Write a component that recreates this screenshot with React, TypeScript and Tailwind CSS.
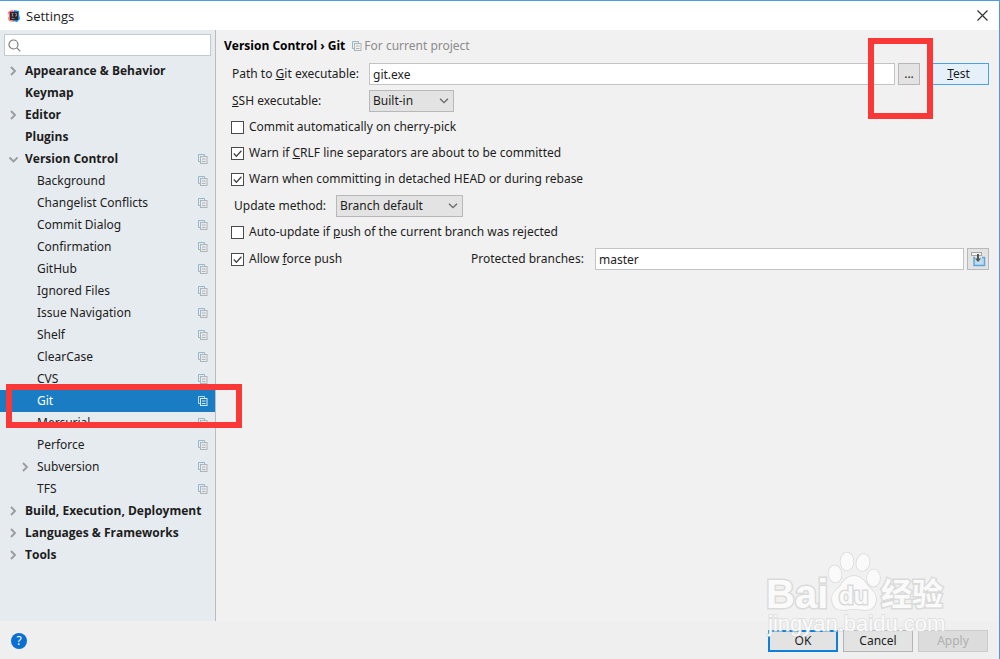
import { useState } from 'react';
import type { ReactNode } from 'react';
import clsx from 'clsx';

type TreeNode = {
  name: string;
  level: 0 | 1;
  arrow?: 'right' | 'down';
  perProject?: boolean;
};

const TREE: TreeNode[] = [
  { name: 'Appearance & Behavior', level: 0, arrow: 'right' },
  { name: 'Keymap', level: 0 },
  { name: 'Editor', level: 0, arrow: 'right' },
  { name: 'Plugins', level: 0 },
  { name: 'Version Control', level: 0, arrow: 'down', perProject: true },
  { name: 'Background', level: 1, perProject: true },
  { name: 'Changelist Conflicts', level: 1, perProject: true },
  { name: 'Commit Dialog', level: 1, perProject: true },
  { name: 'Confirmation', level: 1, perProject: true },
  { name: 'GitHub', level: 1, perProject: true },
  { name: 'Ignored Files', level: 1, perProject: true },
  { name: 'Issue Navigation', level: 1, perProject: true },
  { name: 'Shelf', level: 1, perProject: true },
  { name: 'ClearCase', level: 1, perProject: true },
  { name: 'CVS', level: 1, perProject: true },
  { name: 'Git', level: 1, perProject: true },
  { name: 'Mercurial', level: 1, perProject: true },
  { name: 'Perforce', level: 1, perProject: true },
  { name: 'Subversion', level: 1, arrow: 'right', perProject: true },
  { name: 'TFS', level: 1, perProject: true },
  { name: 'Build, Execution, Deployment', level: 0, arrow: 'right' },
  { name: 'Languages & Frameworks', level: 0, arrow: 'right' },
  { name: 'Tools', level: 0, arrow: 'right' },
];

const SELECTED = 'Git';

function AppIcon() {
  return (
    <svg width="14" height="14" viewBox="0 0 14 14">
      <path d="M1 3l4-2 4 2-2 8-4 1-2-2 1-3z" fill="#fb5f7c" />
      <path d="M2 9l4 1 1 3-5-1z" fill="#f9845a" />
      <path d="M7 1l5 1v3l1 5-3 3-4-1z" fill="#1683e8" />
      <rect x="3" y="3" width="8" height="8" fill="#2a262c" />
      <path d="M4.500 4.500h2M5.500 4.500V7M4.500 7h2M8 4.500h1.500V7H8M4.500 9.500h3" stroke="#bbb" strokeWidth=".6" fill="none" />
    </svg>
  );
}

function Arrow({ dir }: { dir: 'right' | 'down' }) {
  return (
    <svg width="10" height="10" viewBox="0 0 10 10" fill="none" stroke="#989c9f" strokeWidth="1.8">
      {dir === 'right' ? <path d="M3 1l4 4-4 4" /> : <path d="M1.500 3.500l4 4 4-4" />}
    </svg>
  );
}

function ProjectIcon({ active = false }: { active?: boolean }) {
  return (
    <svg width="10" height="10" viewBox="0 0 10 10" fill="none" className="shrink-0">
      <path d="M2 7.500H.5v-7h6V2" stroke={active ? '#b9dcf4' : '#8fb9cf'} />
      <rect x="2.500" y="2.500" width="6.500" height="7" stroke={active ? '#d5eafa' : '#b0b4b7'} />
      <path d="M4 5h3.500M4 7.500h3.500" stroke={active ? '#d5eafa' : '#b0b4b7'} />
    </svg>
  );
}

function Chevron() {
  return (
    <svg
      width="10"
      height="6"
      viewBox="0 0 10 6"
      fill="none"
      stroke="#666"
      strokeWidth="1.3"
      className="pointer-events-none col-start-1 row-start-1 mr-[5px] self-center justify-self-end"
    >
      <path d="M1 .7l4 4 4-4" />
    </svg>
  );
}

function Checkbox({ defaultChecked = false, children }: { defaultChecked?: boolean; children: ReactNode }) {
  return (
    <label className="flex items-center gap-[5px]">
      <span className="grid">
        <input
          type="checkbox"
          defaultChecked={defaultChecked}
          className="peer col-start-1 row-start-1 size-[13px] appearance-none border border-[#4a4a4a] bg-white"
        />
        <svg
          width="13"
          height="13"
          viewBox="0 0 13 13"
          fill="none"
          stroke="#444"
          strokeWidth="1.3"
          className="pointer-events-none invisible col-start-1 row-start-1 peer-checked:visible"
        >
          <path d="M2.800 6.500l2.600 2.700 5-5.500" />
        </svg>
      </span>
      <span>{children}</span>
    </label>
  );
}

function Select({ id, options, className }: { id: string; options: string[]; className: string }) {
  return (
    <div className={clsx('grid', className)}>
      <select
        id={id}
        className="col-start-1 row-start-1 h-[22px] w-full appearance-none border border-[#b8b8b8] bg-[#e3e3e3] pl-[3px] leading-5"
      >
        {options.map(o => (
          <option key={o}>{o}</option>
        ))}
      </select>
      <Chevron />
    </div>
  );
}

function TreeRow({ node }: { node: TreeNode }) {
  const active = node.name === SELECTED;
  return (
    <li className="relative">
      <button
        type="button"
        className={clsx(
          'flex h-[22px] w-full items-center pr-[7px] text-left whitespace-nowrap',
          node.level === 0 ? "pl-2 font-['Open_Sans',sans-serif] font-bold" : 'pl-5',
          active ? 'bg-[#1a7dc4] text-white' : 'text-[#1d1d1d]',
        )}
      >
        <span className="w-[17px] shrink-0">{node.arrow && <Arrow dir={node.arrow} />}</span>
        <span className="flex-1">{node.name}</span>
        {node.perProject && <ProjectIcon active={active} />}
      </button>
      {active && (
        <div className="pointer-events-none absolute -top-1.5 left-1.5 z-10 h-11 w-[236px] border-[6px] border-[#fb3838]" />
      )}
    </li>
  );
}

function Sidebar() {
  const [query, setQuery] = useState('');
  return (
    <aside className="w-[216px] shrink-0 border-r border-[#b9bdc0] bg-[#e6ebef]">
      <div className="px-1 pt-1 pb-1">
        <label className="flex h-[22px] items-center border border-[#c3c9cd] bg-white pl-[3px]">
          <svg width="13" height="13" viewBox="0 0 13 13" fill="none" stroke="#7b7b7b" strokeWidth="1.200">
            <circle cx="5.500" cy="5.500" r="4.500" />
            <path d="M8.800 8.800 12.300 12.300" />
          </svg>
          <input
            aria-label="Search settings"
            value={query}
            onChange={e => setQuery(e.target.value)}
            className="min-w-0 flex-1 px-1 outline-none"
          />
        </label>
      </div>
      <ul>
        {TREE.map(node => (
          <TreeRow key={node.name} node={node} />
        ))}
      </ul>
    </aside>
  );
}

function GitSettings() {
  return (
    <main className="min-w-0 flex-1 pr-2.5">
      <h1 className="flex h-[30px] items-center pt-0.5 pl-2 font-['Open_Sans',sans-serif] font-bold text-black">
        Version Control › Git
        <span className="ml-[7px] flex items-center gap-0.5 font-['Noto_Sans',sans-serif] font-normal text-[#8c8c8c]">
          <ProjectIcon />
          For current project
        </span>
      </h1>

      <form className="pl-[15px]" onSubmit={e => e.preventDefault()}>
        <div className="flex h-7 items-center">
          <label htmlFor="git-path" className="w-[138px] shrink-0 pl-px">
            Path to <u>G</u>it executable:
          </label>
          <input
            id="git-path"
            defaultValue="git.exe"
            className="h-[22px] min-w-0 flex-1 border border-[#c4c4c4] bg-white px-[3px] outline-none"
          />
          <button
            type="button"
            aria-label="Browse"
            className="ml-[3px] h-[22px] w-[22px] border border-[#b8b8b8] bg-[#e3e3e3] leading-5"
          >
            ...
          </button>
          <button type="button" className="ml-2 h-[22px] w-[61px] border border-[#4ba3e3] bg-[#e4f0fa] leading-5">
            <u>T</u>est
          </button>
        </div>

        <div className="flex h-[26px] items-center">
          <label htmlFor="ssh" className="w-[138px] shrink-0 pl-px">
            <u>S</u>SH executable:
          </label>
          <Select id="ssh" options={['Built-in', 'Native']} className="w-[85px]" />
        </div>

        <div className="flex h-[26px] items-center">
          <Checkbox>Commit automatically on cherry-pick</Checkbox>
        </div>
        <div className="flex h-[26px] items-center">
          <Checkbox defaultChecked>
            Warn if <u>C</u>RLF line separators are about to be committed
          </Checkbox>
        </div>
        <div className="flex h-[26px] items-center">
          <Checkbox defaultChecked>Warn when committing in detached HEAD or during rebase</Checkbox>
        </div>

        <div className="flex h-[27px] items-center">
          <label htmlFor="update-method" className="w-[105px] shrink-0 pl-[3px]">
            Update method:
          </label>
          <Select id="update-method" options={['Branch default', 'Merge', 'Rebase']} className="w-[127px]" />
        </div>

        <div className="flex h-[26px] items-center">
          <Checkbox>
            Auto-update if <u>p</u>ush of the current branch was rejected
          </Checkbox>
        </div>

        <div className="flex h-7 items-center">
          <div className="w-60 shrink-0">
            <Checkbox defaultChecked>
              Allow <u>f</u>orce push
            </Checkbox>
          </div>
          <label htmlFor="protected" className="w-[124px] shrink-0">
            Protected branches:
          </label>
          <input
            id="protected"
            defaultValue="master"
            className="h-[22px] min-w-0 flex-1 border border-[#c4c4c4] bg-white px-[3px] outline-none"
          />
          <button
            type="button"
            aria-label="Expand protected branches"
            className="ml-[3px] flex h-[22px] w-[22px] items-center justify-center border border-[#b8b8b8] bg-[#e3e3e3]"
          >
            <svg width="16" height="16" viewBox="0 0 16 16" fill="none" className="shrink-0">
              <rect x="1.500" y="1.500" width="10" height="3" fill="#f4f4f4" stroke="#a5a5a5" />
              <path d="M5 6.500H4v8h10.500v-8H12" fill="#bfdcf0" stroke="#5fa6d6" strokeWidth="1.500" />
              <path d="M8 3v5" stroke="#555" strokeWidth="2" />
              <path d="M5 7.500h6L8 11z" fill="#555" />
            </svg>
          </button>
        </div>
      </form>
    </main>
  );
}

function Watermark() {
  return (
    <svg
      width="184"
      height="92"
      viewBox="0 0 184 92"
      className="pointer-events-none absolute right-[50px] bottom-5"
      fill="#fafafa"
      stroke="#dadada"
      strokeWidth="1.500"
      paintOrder="stroke"
    >
      <text x="1" y="61" fontSize="40" fontWeight="700" fontFamily="Liberation Sans, sans-serif" strokeWidth="3">
        Bai
      </text>
      <ellipse cx="70" cy="27" rx="6.500" ry="8.500" transform="rotate(-8 70 27)" />
      <ellipse cx="82" cy="14.500" rx="6.500" ry="9" />
      <ellipse cx="98" cy="15.500" rx="6.500" ry="8.500" transform="rotate(12 98 15.500)" />
      <ellipse cx="108.500" cy="31" rx="6.500" ry="8.500" />
      <path d="M89 29c6 0 10 4 13 9 4 5 9 7 9 14 0 8-5 11-11 11-4 0-7-1-11-1s-7 1-11 1c-6 0-11-3-11-11 0-7 5-9 9-14 3-5 7-9 13-9z" />
      <text x="74" y="57" fontSize="24" fontWeight="700" fontFamily="Liberation Sans, sans-serif" strokeWidth="3">
        du
      </text>
      <text x="116" y="58" fontSize="31" fontWeight="700" fontFamily="Noto Sans CJK SC, sans-serif" strokeWidth="3">
        经验
      </text>
      <text x="3" y="84" fontSize="22" fontFamily="Liberation Sans, sans-serif" strokeWidth="2" strokeOpacity=".7">
        jingyan.baidu.com
      </text>
    </svg>
  );
}

export default function App() {
  return (
    <div className="relative flex min-h-screen flex-col border-t border-r border-[#4a9be0] bg-[#f1f1f1] font-['Noto_Sans',sans-serif] text-[12px] leading-5 text-[#1d1d1d]">
      <header className="flex h-[29px] items-center bg-white pl-[7px]">
        <AppIcon />
        <span className="flex-1 pl-[5px] font-['Open_Sans',sans-serif] text-[13px]">Settings</span>
        <button type="button" aria-label="Close" className="flex h-full w-[34px] items-center justify-center">
          <svg width="11" height="11" viewBox="0 0 11 11" fill="none" stroke="#333" strokeWidth="1.200">
            <path d="M.5.5l10 10M10.500.5l-10 10" />
          </svg>
        </button>
      </header>

      <div className="flex flex-1">
        <Sidebar />
        <GitSettings />
      </div>

      <footer className="flex h-[38px] items-center gap-[5px] bg-[#efefef] px-[11px] pt-0.5">
        <button type="button" aria-label="Help" className="size-4 rounded-full bg-[#0a6fd0] leading-4 text-white">
          ?
        </button>
        <span className="flex-1" />
        <button type="button" className="h-[22px] w-[70px] border-2 border-[#0e80d8] bg-[#e3e3e3] leading-[18px]">
          OK
        </button>
        <button type="button" className="h-[22px] w-[70px] border border-[#b5b5b5] bg-[#e3e3e3] leading-5">
          Cancel
        </button>
        <button type="button" disabled className="h-[22px] w-[70px] border border-[#cbcbcb] bg-[#dcdcdc] leading-5 text-[#b0b0b0]">
          Apply
        </button>
      </footer>

      {/* highlight around the browse button */}
      <div className="pointer-events-none absolute top-[37px] right-[66px] h-[81px] w-[65px] border-[6px] border-[#fb3838]" />
      <Watermark />
    </div>
  );
}
